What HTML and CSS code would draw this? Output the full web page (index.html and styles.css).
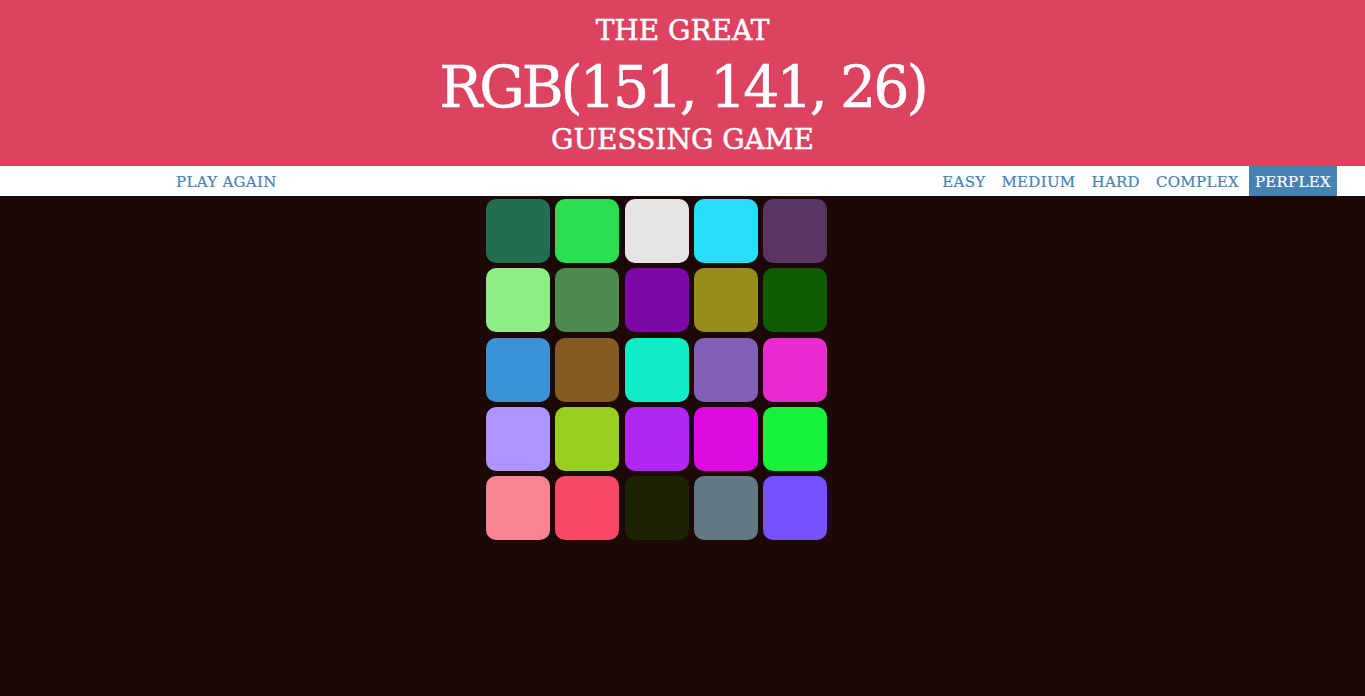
FILE: index.html
```html
<!DOCTYPE html>
<html>
<head>
<meta charset="utf-8">
<link rel="stylesheet" href="styles.css">
</head>
<body>
<header class="header">
  <div class="line small">THE GREAT</div>
  <div class="line big">RGB(151, 141, 26)</div>
  <div class="line small">GUESSING GAME</div>
</header>
<nav class="nav">
  <span class="btn">PLAY AGAIN</span>
  <div class="modes">
    <span class="btn">EASY</span>
    <span class="btn">MEDIUM</span>
    <span class="btn">HARD</span>
    <span class="btn">COMPLEX</span>
    <span class="btn selected">PERPLEX</span>
  </div>
</nav>
<main class="board">
  <div class="grid">
    <div class="sq" style="background:#236E50"></div>
    <div class="sq" style="background:#2ADF50"></div>
    <div class="sq" style="background:#E5E3E6"></div>
    <div class="sq" style="background:#27DDF8"></div>
    <div class="sq" style="background:#5B3562"></div>
    <div class="sq" style="background:#8EEE86"></div>
    <div class="sq" style="background:#4D8A50"></div>
    <div class="sq" style="background:#7E07A7"></div>
    <div class="sq" style="background:#978D1A"></div>
    <div class="sq" style="background:#125B06"></div>
    <div class="sq" style="background:#3B92D8"></div>
    <div class="sq" style="background:#835B23"></div>
    <div class="sq" style="background:#12EDC8"></div>
    <div class="sq" style="background:#8160B8"></div>
    <div class="sq" style="background:#E92AD0"></div>
    <div class="sq" style="background:#AE94FE"></div>
    <div class="sq" style="background:#9ACE1F"></div>
    <div class="sq" style="background:#B026F2"></div>
    <div class="sq" style="background:#DC0CE0"></div>
    <div class="sq" style="background:#18F23A"></div>
    <div class="sq" style="background:#F78394"></div>
    <div class="sq" style="background:#FA4966"></div>
    <div class="sq" style="background:#1C2405"></div>
    <div class="sq" style="background:#627882"></div>
    <div class="sq" style="background:#7651FE"></div>
  </div>
</main>
</body>
</html>
```
FILE: styles.css
```css
html, body {
  margin: 0;
  padding: 0;
  height: 100%;
}
body {
  background: #1C0907;
  font-family: "DejaVu Serif", "Liberation Serif", serif;
}
.header {
  background: #DB4360;
  color: #fff;
  height: 166px;
  box-sizing: border-box;
  padding-top: 13px;
  text-align: center;
  -webkit-text-stroke: 0.5px #fff;
}
.line {
  white-space: nowrap;
}
.small {
  font-size: 28px;
  line-height: 36px;
}
.big {
  font-size: 57px;
  line-height: 70px;
  letter-spacing: -3px;
  margin-top: 3px;
}
.nav {
  background: #fff;
  height: 30px;
  display: flex;
  justify-content: space-between;
  align-items: stretch;
  padding: 0 28px 0 170px;
}
.modes {
  display: flex;
  gap: 4px;
}
.btn {
  color: #4682B4;
  font-size: 15px;
  padding: 1px 6px 0;
  display: flex;
  align-items: center;
  letter-spacing: 0.3px;
  -webkit-text-stroke: 0.2px #4682B4;
}
.selected {
  background: #4682B4;
  color: #fff;
  -webkit-text-stroke: 0.2px #fff;
}
.board {
  display: flex;
  justify-content: center;
  padding: 3px 52px 0 0;
}
.grid {
  display: grid;
  grid-template-columns: repeat(5, 64px);
  grid-auto-rows: 64px;
  gap: 5.25px;
}
.sq {
  border-radius: 10px;
}
```
